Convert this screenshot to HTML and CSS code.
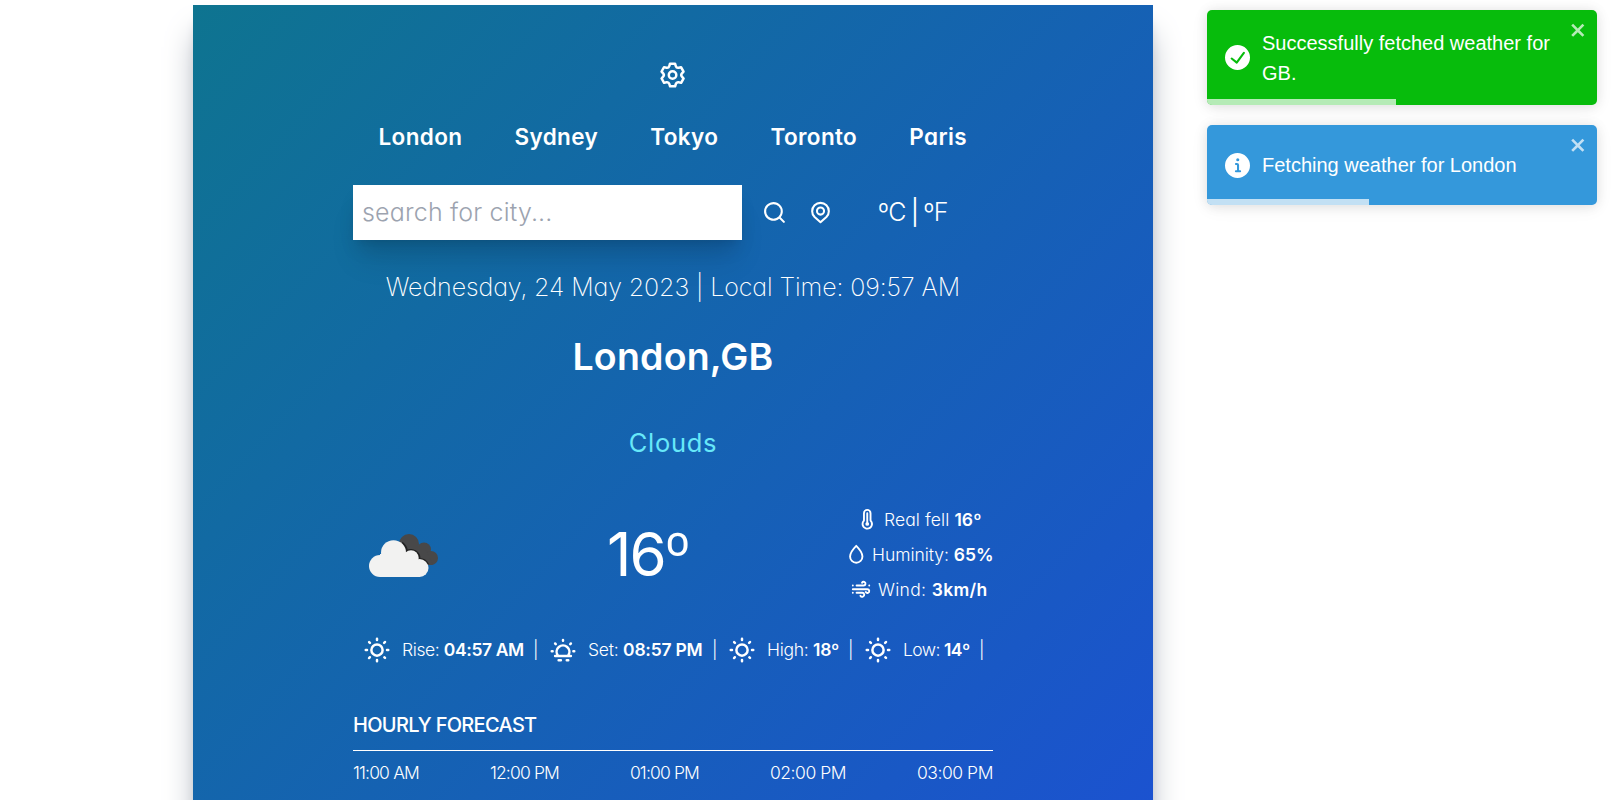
FILE: index.html
```html
<!DOCTYPE html>
<html lang="en">
<head>
<meta charset="utf-8">
<title>Weather</title>
<link rel="stylesheet" href="styles.css">
</head>
<body>
<svg class="defs" aria-hidden="true">
  <symbol id="sun" viewBox="0 0 24 24"><path fill="currentColor" d="M5.64,17l-.71.71a1,1,0,0,0,0,1.41,1,1,0,0,0,1.41,0l.71-.71A1,1,0,0,0,5.64,17ZM5,12a1,1,0,0,0-1-1H3a1,1,0,0,0,0,2H4A1,1,0,0,0,5,12Zm7-7a1,1,0,0,0,1-1V3a1,1,0,0,0-2,0V4A1,1,0,0,0,12,5ZM5.64,7.05a1,1,0,0,0,.7.29,1,1,0,0,0,.71-.29,1,1,0,0,0,0-1.41l-.71-.71A1,1,0,0,0,4.93,6.34Zm12,.29a1,1,0,0,0,.7-.29l.71-.71a1,1,0,1,0-1.41-1.41L17,5.64a1,1,0,0,0,0,1.41A1,1,0,0,0,17.66,7.34ZM21,11H20a1,1,0,0,0,0,2h1a1,1,0,0,0,0-2Zm-9,8a1,1,0,0,0-1,1v1a1,1,0,0,0,2,0V20A1,1,0,0,0,12,19ZM18.36,17A1,1,0,0,0,17,18.36l.71.71a1,1,0,0,0,1.41,0,1,1,0,0,0,0-1.41ZM12,6.5A5.5,5.5,0,1,0,17.5,12,5.51,5.51,0,0,0,12,6.5Zm0,9A3.5,3.5,0,1,1,15.5,12,3.5,3.5,0,0,1,12,15.5Z"/></symbol>
  <symbol id="close" viewBox="0 0 14 16"><path fill="currentColor" fill-rule="evenodd" d="M7.71 8.23l3.75 3.75-1.48 1.48-3.75-3.75-3.75 3.75L1 11.98l3.75-3.75L1 4.48 2.48 3l3.75 3.75L9.98 3l1.48 1.48-3.75 3.75z"/></symbol>
</svg>
<main class="card">
  <svg class="icon-lg cog" viewBox="0 0 24 24"><path fill="currentColor" d="M19.9,12.66a1,1,0,0,1,0-1.32L21.18,9.9a1,1,0,0,0,.12-1.17l-2-3.46a1,1,0,0,0-1.07-.48l-1.88.38a1,1,0,0,1-1.15-.66l-.61-1.83A1,1,0,0,0,13.64,2h-4a1,1,0,0,0-1,.68L8.08,4.51a1,1,0,0,1-1.15.66L5,4.79A1,1,0,0,0,4,5.27L2,8.73A1,1,0,0,0,2.1,9.9l1.27,1.44a1,1,0,0,1,0,1.32L2.1,14.1A1,1,0,0,0,2,15.27l2,3.46a1,1,0,0,0,1.07.48l1.88-.38a1,1,0,0,1,1.15.66l.61,1.83a1,1,0,0,0,1,.68h4a1,1,0,0,0,.95-.68l.61-1.83a1,1,0,0,1,1.15-.66l1.88.38a1,1,0,0,0,1.07-.48l2-3.46a1,1,0,0,0-.12-1.17ZM18.41,14l.8.9-1.28,2.22-1.18-.24a3,3,0,0,0-3.45,2L12.92,20H10.36L10,18.86a3,3,0,0,0-3.45-2l-1.18.24L4.07,14.89l.8-.9a3,3,0,0,0,0-4l-.8-.9L5.35,6.89l1.18.24a3,3,0,0,0,3.45-2L10.36,4h2.56l.38,1.14a3,3,0,0,0,3.45,2l1.18-.24,1.28,2.22-.8.9A3,3,0,0,0,18.41,14ZM11.64,8a4,4,0,1,0,4,4A4,4,0,0,0,11.64,8Zm0,6a2,2,0,1,1,2-2A2,2,0,0,1,11.64,14Z"/></svg>
  <nav class="cities"><span>London</span><span>Sydney</span><span>Tokyo</span><span>Toronto</span><span>Paris</span></nav>
  <div class="search-row">
    <div class="search">search for city...</div>
    <svg class="icon-md find" viewBox="0 0 24 24"><path fill="currentColor" d="M21.71,20.29,18,16.61A9,9,0,1,0,16.61,18l3.68,3.68a1,1,0,0,0,1.42,0A1,1,0,0,0,21.71,20.29ZM11,18a7,7,0,1,1,7-7A7,7,0,0,1,11,18Z"/></svg>
    <svg class="icon-md pin line" viewBox="0 0 24 24"><path d="M6.34 16.4A8 8 0 1 1 17.66 16.4L12 21.3Z"/><circle cx="12" cy="10.6" r="3.4"/></svg>
    <div class="units"><span>ºC</span><b>|</b><span>ºF</span></div>
  </div>
  <p class="date">Wednesday, 24 May 2023 | Local Time: 09:57 AM</p>
  <h1 class="place">London,GB</h1>
  <p class="sky">Clouds</p>
  <section class="now">
    <svg class="cloud" viewBox="0 0 76 50">
      <g class="cloud-back"><circle cx="42" cy="14" r="10"/><circle cx="57" cy="19.500" r="7"/><circle cx="64" cy="28" r="7"/><path d="M38 18h20l8 17H44z"/></g>
      <g class="cloud-edge"><path d="M35 12.500A13.500 13.500 0 0 1 40 21A8.500 8.500 0 0 1 52.500 29A9.500 9.500 0 0 1 61 34.500"/></g>
      <g class="cloud-front"><circle cx="13" cy="36" r="11"/><circle cx="26.500" cy="22.700" r="12.500"/><circle cx="44" cy="28" r="7.700"/><circle cx="52.500" cy="38" r="9"/><path d="M13 24h30l10 12v11H13z"/></g>
    </svg>
    <div class="temp">16<span>º</span></div>
    <div class="details">
      <p><svg class="icon-sm" viewBox="0 0 24 24"><path fill="currentColor" d="M13,15.28V5.5a1,1,0,0,0-2,0v9.78A2,2,0,0,0,10,17a2,2,0,0,0,4,0A2,2,0,0,0,13,15.28ZM16.5,13V5.5a4.5,4.5,0,0,0-9,0V13a6,6,0,0,0,3.21,9.83A7,7,0,0,0,12,23a6,6,0,0,0,4.5-10Zm-2,7.07a4,4,0,0,1-6.42-2.2,4,4,0,0,1,1.1-3.76,1,1,0,0,0,.3-.71V5.5a2.5,2.5,0,0,1,5,0v7.94a1,1,0,0,0,.3.71,4,4,0,0,1-.28,6Z"/></svg><span>Real fell <b>16º</b></span></p>
      <p class="humidity"><svg class="icon-sm line" viewBox="0 0 24 24"><path d="M12 3C9 6 5.400 10 5.400 14.400A6.600 6.600 0 0 0 18.600 14.400C18.600 10 15 6 12 3Z"/></svg><span>Huminity: <b>65%</b></span></p>
      <p class="wind"><svg class="icon-sm line" viewBox="0 0 24 24"><path d="M3 8h.01M7 8h7.500a2 2 0 1 0-1.700-3M20.500 8h.01M3 12h15.500a2 2 0 1 1-1.700 3M3 15.700h.01M7 15.700h6a2.200 2.200 0 1 1-1.900 3.300"/></svg><span>Wind: <b>3km/h</b></span></p>
    </div>
  </section>
  <section class="stats">
    <svg class="icon-lg"><use href="#sun"/></svg><span class="rise">Rise: <b>04:57 AM</b></span><i>|</i>
    <svg class="icon-lg line" viewBox="0 0 24 24"><path d="M5.700 16.800h12.600M7.700 16.200a5.100 5.100 0 1 1 8.600 0M3 13h.700M20.300 13h.700M12 4v.500M5.700 6.800l.5.500M18.300 6.800l-.5.500M8.500 20.200h1.800M15 20.200h1.200"/></svg><span class="set">Set: <b>08:57 PM</b></span><i>|</i>
    <svg class="icon-lg"><use href="#sun"/></svg><span class="high">High: <b>18º</b></span><i>|</i>
    <svg class="icon-lg"><use href="#sun"/></svg><span class="low">Low: <b>14º</b></span><i>|</i>
  </section>
  <h2 class="heading">HOURLY FORECAST</h2>
  <div class="hours"><span class="narrow">11:00 AM</span><span class="narrow">12:00 PM</span><span class="narrow">01:00 PM</span><span>02:00 PM</span><span>03:00 PM</span></div>
</main>
<aside class="toasts">
  <div class="toast success">
    <svg class="toast-icon" viewBox="0 0 24 24"><path fill="currentColor" d="M12 0a12 12 0 1012 12A12.014 12.014 0 0012 0zm6.927 8.200l-6.845 9.289a1.011 1.011 0 01-1.430.188l-4.888-3.908a1 1 0 111.250-1.562l4.076 3.261 6.227-8.451a1 1 0 111.610 1.183z"/></svg>
    <p>Successfully fetched weather for GB.</p>
    <svg class="close"><use href="#close"/></svg><div class="progress"></div>
  </div>
  <div class="toast info">
    <svg class="toast-icon" viewBox="0 0 24 24"><path fill="currentColor" d="M12 0a12 12 0 1012 12A12.013 12.013 0 0012 0zm.250 5a1.500 1.500 0 11-1.500 1.500 1.500 1.500 0 011.500-1.500zm2.250 13.500h-4a1 1 0 010-2h.750a.250.250 0 00.250-.250v-4.500a.250.250 0 00-.250-.250h-.750a1 1 0 010-2h1a2 2 0 012 2v4.750a.250.250 0 00.250.250h.750a1 1 0 110 2z"/></svg>
    <p>Fetching weather for London</p>
    <svg class="close"><use href="#close"/></svg><div class="progress"></div>
  </div>
</aside>
</body>
</html>
```
FILE: styles.css
```css
* { box-sizing: border-box; margin: 0; padding: 0; }
html { overflow: hidden; }
body {
  height: 800px;
  overflow: hidden;
  background: #fff;
  color: #fff;
  font-family: Inter, "Open Sans", sans-serif;
  font-feature-settings: "cv11";
  font-weight: 300;
  padding-left: 193px;
  padding-top: 5px;
  display: flex;
  align-items: flex-start;
}
b { font-weight: 560; }
svg { flex: none; display: block; }
.defs { position: absolute; width: 0; height: 0; }
.line { fill: none; stroke: currentColor; stroke-width: 2; stroke-linecap: round; stroke-linejoin: round; }
.card {
  flex: none;
  width: 960px;
  height: 1040px;
  padding: 55px 160px 0;
  background: linear-gradient(to bottom right, #0e7490, #1d4ed8);
  box-shadow: 0 25px 31px -6px #9ca3af, 0 10px 12.500px -7.500px #9ca3af;
}
.icon-lg { width: 30px; height: 30px; }
.icon-md { width: 25px; height: 25px; }
.icon-sm { width: 22.500px; height: 22.500px; }
.cog { margin: 0 auto; }
.cities {
  display: flex;
  justify-content: space-between;
  padding: 0 26px 0 25.500px;
  margin-top: 29px;
  font-size: 22.500px;
  line-height: 35px;
  font-weight: 560;
  letter-spacing: .36px;
}
.search-row { display: flex; align-items: center; margin-top: 31px; height: 55px; }
.search {
  width: 389px;
  height: 55px;
  padding: 10px 9px;
  background: #fff;
  color: #9ca3af;
  font-size: 25px;
  line-height: 35px;
  letter-spacing: .18px;
  box-shadow: 0 12px 19px -4px rgba(0,0,0,.1), 0 5px 7.500px -5px rgba(0,0,0,.1), 0 25px 31px -6px rgba(0,0,0,.1);
}
.find { margin-left: 20px; }
.pin { margin-left: 20.500px; }
.units { display: flex; gap: 5px; margin-left: 45.500px; font-size: 25px; line-height: 35px; letter-spacing: -.6px; }
.units b { font-weight: 400; }
.date { margin-top: 30px; text-align: center; font-size: 25px; line-height: 35px; font-weight: 200; letter-spacing: -.1px; white-space: nowrap; }
.place { margin-top: 29px; text-align: center; font-size: 37.500px; line-height: 45px; font-weight: 560; letter-spacing: .2px; }
.sky { margin-top: 46px; text-align: center; font-size: 25.500px; line-height: 35px; font-weight: 400; letter-spacing: .7px; color: #67e8f9; }
.now { display: flex; margin-top: 45px; height: 105px; }
.cloud { width: 76px; height: 50px; margin: 25px 0 0 14px; }
.cloud-back { fill: #484849; }
.cloud-edge { fill: none; stroke: #222; stroke-width: 2; }
.cloud-front { fill: #f2f2f1; }
.temp { margin: 19px 0 0 164px; width: 84px; font-size: 60px; line-height: 60px; font-weight: 400; letter-spacing: -1.900px; white-space: nowrap; }
.temp span { font-weight: 300; }
.details { width: 148px; margin: 2px 0 0 auto; display: flex; flex-direction: column; align-items: center; gap: 10px; font-size: 17.500px; line-height: 25px; white-space: nowrap; letter-spacing: .1px; }
.details p { display: flex; align-items: center; }
.details svg { margin-right: 5px; }
.humidity { letter-spacing: -.05px; }
.wind { letter-spacing: .35px; }
.stats { display: flex; align-items: center; gap: 10px; margin-top: 22px; padding-left: 9px; height: 35px; font-size: 17.500px; white-space: nowrap; }
.stats i { font-style: normal; width: 5px; text-align: center; }
.stats span { flex: none; }
.rise { width: 121px; letter-spacing: -.4px; }
.set { width: 114px; letter-spacing: -.24px; }
.high { width: 71px; letter-spacing: -.28px; }
.low { width: 66px; letter-spacing: -.6px; }
.heading { margin-top: 43px; padding-bottom: 10px; border-bottom: 1px solid #fff; font-size: 20px; line-height: 30px; font-weight: 500; letter-spacing: -.7px; }
.hours { display: flex; justify-content: space-between; margin-top: 9px; font-size: 17.500px; line-height: 25px; letter-spacing: -.46px; }
.narrow { letter-spacing: -.85px; }
.toasts { flex: none; width: 390px; margin: 5px 0 0 54px; font-family: "Liberation Sans", Arial, sans-serif; font-weight: 400; font-size: 20px; line-height: 30px; }
.toast { position: relative; display: flex; align-items: center; padding: 0 40px 0 18px; margin-bottom: 20px; border-radius: 5px; overflow: hidden; box-shadow: 0 1px 12px rgba(0,0,0,.1), 0 2.500px 19px rgba(0,0,0,.05); }
.success { height: 95px; background: #07bc0c; }
.info { height: 80px; background: #3498db; }
.toast-icon { width: 25px; height: 25px; margin-right: 12px; }
.close { position: absolute; top: 10px; right: 10px; width: 17.500px; height: 20px; opacity: .7; }
.progress { position: absolute; left: 0; bottom: 0; height: 6px; background: rgba(255,255,255,.7); }
.success .progress { width: 189px; }
.info .progress { width: 162px; }
```
